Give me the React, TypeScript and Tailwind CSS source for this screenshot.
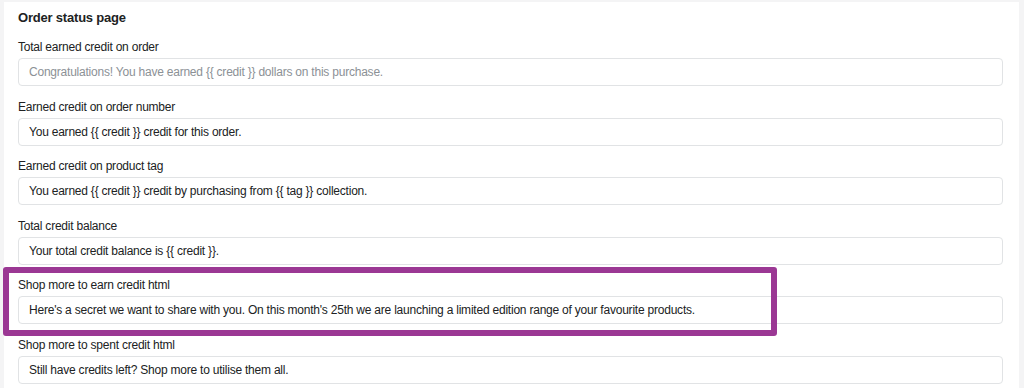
import React from "react";

const fields: { label: string; value: string; placeholder?: boolean }[] = [
  { label: "Total earned credit on order", value: "Congratulations! You have earned {{ credit }} dollars on this purchase.", placeholder: true },
  { label: "Earned credit on order number", value: "You earned {{ credit }} credit for this order." },
  { label: "Earned credit on product tag", value: "You earned {{ credit }} credit by purchasing from {{ tag }} collection." },
  { label: "Total credit balance", value: "Your total credit balance is {{ credit }}." },
  { label: "Shop more to earn credit html", value: "Here's a secret we want to share with you. On this month's 25th we are launching a limited edition range of your favourite products." },
  { label: "Shop more to spent credit html", value: "Still have credits left? Shop more to utilise them all." },
];

export default function App() {
  return (
    <div className="h-[388px] w-[1024px] overflow-hidden bg-[#f4f4f5] pt-[2px] pl-[4px] pr-[5px] font-['Liberation_Sans',Arial,sans-serif] text-[#202223]">
      <div className="relative h-[420px] bg-white pl-[14px] pr-[16px] pt-[6px]">
        <h2 className="text-[13px] font-bold leading-[20px] tracking-[-0.2px]">Order status page</h2>
        <div className="mt-[9px] flex flex-col gap-[10.6px]">
          {fields.map((f) => (
            <div key={f.label} className="flex flex-col">
              <label className="text-[12px] leading-[20px] tracking-[-0.22px]">{f.label}</label>
              <div className="mt-[1px] flex h-[28px] items-center rounded-[4px] border border-[#e1e3e5] px-[10px]">
                <span className={"text-[12px] tracking-[-0.22px] " + (f.placeholder ? "text-[#8c9196]" : "text-[#202223]")}>
                  {f.value}
                </span>
              </div>
            </div>
          ))}
        </div>
        <div className="pointer-events-none absolute left-[-1px] top-[265px] h-[69px] w-[774px] rounded-[3px] border-[6px] border-[#9b3894]" />
      </div>
    </div>
  );
}
